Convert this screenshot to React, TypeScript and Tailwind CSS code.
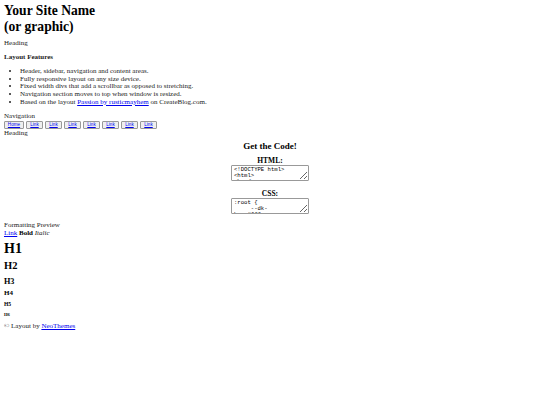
const features = [
  "Header, sidebar, navigation and content areas.",
  "Fully responsive layout on any size device.",
  "Fixed width divs that add a scrollbar as opposed to stretching.",
  "Navigation section moves to top when window is resized.",
];

const navLinks = ["Home", "Link", "Link", "Link", "Link", "Link", "Link", "Link"];

function CodeBox({ label, code }: { label: string; code: string }) {
  return (
    <div className="flex flex-col items-center">
      <h3 className="text-[7.5px] font-bold leading-[9px] text-black">{label}</h3>
      <textarea
        readOnly
        value={code}
        className="mt-[0px] h-[16px] w-[78px] overflow-hidden rounded-[1px] border border-[#999] bg-white px-[2px] py-[1px] font-['Liberation_Mono',monospace] text-[5.6px] leading-[6px] text-black"
      />
    </div>
  );
}

export default function App() {
  return (
    <div className="min-h-[405px] bg-white px-[4px] pt-[3px] font-['Liberation_Serif',serif] text-[7px] leading-[8px] text-[#222]">
      <header>
        <h1 className="text-[13.6px] font-bold leading-[15.5px] text-black">
          Your Site Name
          <br />
          (or graphic)
        </h1>
        <p className="mt-[5px]">Heading</p>
      </header>

      <section className="mt-[6px]">
        <h4 className="font-bold">Layout Features</h4>
        <ul className="mt-[7px] list-disc pl-[16px] leading-[7.7px]">
          {features.map((f) => (
            <li key={f}>{f}</li>
          ))}
          <li>
            Based on the layout{" "}
            <a href="#" className="text-[#0000ee] underline">
              Passion by rusticmayhem
            </a>{" "}
            on CreateBlog.com.
          </li>
        </ul>
      </section>

      <nav className="mt-[5.5px]">
        <p>Navigation</p>
        <div className="mt-[1px] flex gap-[2px]">
          {navLinks.map((l, i) => (
            <button
              key={i}
              className={`flex h-[8px] items-center justify-center rounded-[1px] border border-[#999] bg-[#efefef] font-['Liberation_Sans',sans-serif] text-[4.6px] leading-none text-[#0000ee] underline ${
                i === 0 ? "w-[20px]" : "w-[17px]"
              }`}
            >
              {l}
            </button>
          ))}
        </div>
        <p>Heading</p>
      </nav>

      <section className="mt-[4px] flex flex-col items-center">
        <h2 className="text-[9px] font-bold leading-[10px] text-black">Get the Code!</h2>
        <div className="mt-[5px]">
          <CodeBox label="HTML:" code={"<!DOCTYPE html>\n<html>\n<head>"} />
        </div>
        <div className="mt-[8px]">
          <CodeBox label="CSS:" code={":root {\n     --dk-\nbg: #fff;"} />
        </div>
      </section>

      <section className="mt-[7px]">
        <p>Formatting Preview</p>
        <p>
          <a href="#" className="text-[#0000ee] underline">
            Link
          </a>{" "}
          <b className="text-black">Bold</b> <i>Italic</i>
        </p>
        <div className="text-black">
          <h1 className="mt-[4px] text-[14px] font-bold leading-[16px]">H1</h1>
          <h2 className="mt-[3px] text-[10.5px] font-bold leading-[12px]">H2</h2>
          <h3 className="mt-[5px] text-[8.2px] font-bold leading-[10px]">H3</h3>
          <h4 className="mt-[2px] text-[7px] font-bold leading-[8px]">H4</h4>
          <h5 className="mt-[4px] text-[5.6px] font-bold leading-[7px]">H5</h5>
          <h6 className="mt-[4px] text-[4.6px] font-bold leading-[6px]">H6</h6>
        </div>
      </section>

      <footer className="mt-[4px]">
        © Layout by{" "}
        <a href="#" className="text-[#0000ee] underline">
          NeoThemes
        </a>
      </footer>
    </div>
  );
}
